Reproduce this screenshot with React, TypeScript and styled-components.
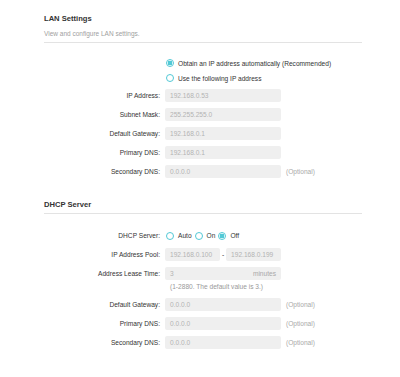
import React from "react";
import styled, { createGlobalStyle } from "styled-components";

const Global = createGlobalStyle`
  html, body { margin: 0; padding: 0; background: #fff; }
  body { font-family: "Liberation Sans", Arial, sans-serif; }
`;

const Page = styled.div`
  width: 400px;
  height: 377px;
  box-sizing: border-box;
  padding: 14px 38px 0 44px;
  color: #333;
`;

const Section = styled.section<{ $gapTop?: number }>`
  margin-top: ${(p) => p.$gapTop ?? 0}px;
`;

const Header = styled.div`
  padding-bottom: 3px;
  border-bottom: 1px solid #e3e3e3;
`;

const Title = styled.div`
  font-size: 7.6px;
  font-weight: bold;
  line-height: 10px;
  color: #333;
`;

const Subtitle = styled.div`
  margin-top: 5px;
  font-size: 6.5px;
  line-height: 10px;
  color: #a0a0a0;
`;

const RadioStack = styled.div`
  display: flex;
  flex-direction: column;
  gap: 5px;
  margin: 15px 0 6px 122px;
`;

const RadioOption = styled.label`
  display: inline-flex;
  align-items: center;
  gap: 4px;
  height: 10px;
  font-size: 6.6px;
  color: #333;
  margin-right: 3px;
`;

const Circle = styled.span<{ $checked?: boolean }>`
  width: 6px;
  height: 6px;
  border-radius: 50%;
  border: 1px solid #52c9d6;
  background: ${(p) =>
    p.$checked ? "radial-gradient(circle, #52c9d6 0 2.2px, #fff 2.6px)" : "#fff"};
  flex: none;
`;

const Form = styled.div<{ $top?: number }>`
  display: grid;
  grid-template-columns: 116px 116px auto;
  column-gap: 5px;
  row-gap: 6px;
  align-items: start;
  margin-top: ${(p) => p.$top ?? 0}px;
`;

const Label = styled.div`
  height: 13px;
  line-height: 13px;
  text-align: right;
  font-size: 6.6px;
  color: #333;
  white-space: nowrap;
`;

const Field = styled.div`
  display: flex;
  flex-direction: column;
`;

const Input = styled.div`
  height: 13px;
  box-sizing: border-box;
  padding: 0 5px;
  border-radius: 2px;
  background: #efefef;
  display: flex;
  align-items: center;
  justify-content: space-between;
  font-size: 6.6px;
  color: #b3b3b3;
  flex: none;
`;

const Unit = styled.span`
  color: #a8a8a8;
`;

const Pair = styled.div`
  display: flex;
  align-items: center;
  gap: 2px;
  font-size: 6.6px;
  color: #333;
  & > ${Input} {
    flex: 1;
    min-width: 0;
  }
`;

const Note = styled.div`
  height: 13px;
  line-height: 13px;
  font-size: 6.6px;
  color: #aaa;
  white-space: nowrap;
`;

const Hint = styled.div`
  margin-top: 2px;
  padding-left: 5px;
  line-height: 10px;
  font-size: 6.6px;
  color: #999;
  white-space: nowrap;
`;

const RadioRow = styled.div`
  height: 13px;
  display: flex;
  align-items: center;
  padding-left: 1px;
`;

const Radio = ({ checked, children }: { checked?: boolean; children: React.ReactNode }) => (
  <RadioOption>
    <Circle $checked={checked} />
    <span>{children}</span>
  </RadioOption>
);

const Row = ({ label, value, note }: { label: string; value: string; note?: string }) => (
  <>
    <Label>{label}</Label>
    <Input>{value}</Input>
    <Note>{note ?? ""}</Note>
  </>
);

export default function App() {
  return (
    <>
      <Global />
      <Page>
        <Section>
          <Header>
            <Title>LAN Settings</Title>
            <Subtitle>View and configure LAN settings.</Subtitle>
          </Header>
          <RadioStack>
            <Radio checked>Obtain an IP address automatically (Recommended)</Radio>
            <Radio>Use the following IP address</Radio>
          </RadioStack>
          <Form>
            <Row label="IP Address:" value="192.168.0.53" />
            <Row label="Subnet Mask:" value="255.255.255.0" />
            <Row label="Default Gateway:" value="192.168.0.1" />
            <Row label="Primary DNS:" value="192.168.0.1" />
            <Row label="Secondary DNS:" value="0.0.0.0" note="(Optional)" />
          </Form>
        </Section>
        <Section $gapTop={22}>
          <Header>
            <Title>DHCP Server</Title>
          </Header>
          <Form $top={15}>
            <Label>DHCP Server:</Label>
            <RadioRow>
              <Radio>Auto</Radio>
              <Radio>On</Radio>
              <Radio checked>Off</Radio>
            </RadioRow>
            <Note />
            <Label>IP Address Pool:</Label>
            <Pair>
              <Input>192.168.0.100</Input>
              <span>-</span>
              <Input>192.168.0.199</Input>
            </Pair>
            <Note />
            <Label>Address Lease Time:</Label>
            <Field>
              <Input>
                <span>3</span>
                <Unit>minutes</Unit>
              </Input>
              <Hint>(1-2880. The default value is 3.)</Hint>
            </Field>
            <Note />
            <Row label="Default Gateway:" value="0.0.0.0" note="(Optional)" />
            <Row label="Primary DNS:" value="0.0.0.0" note="(Optional)" />
            <Row label="Secondary DNS:" value="0.0.0.0" note="(Optional)" />
          </Form>
        </Section>
      </Page>
    </>
  );
}
